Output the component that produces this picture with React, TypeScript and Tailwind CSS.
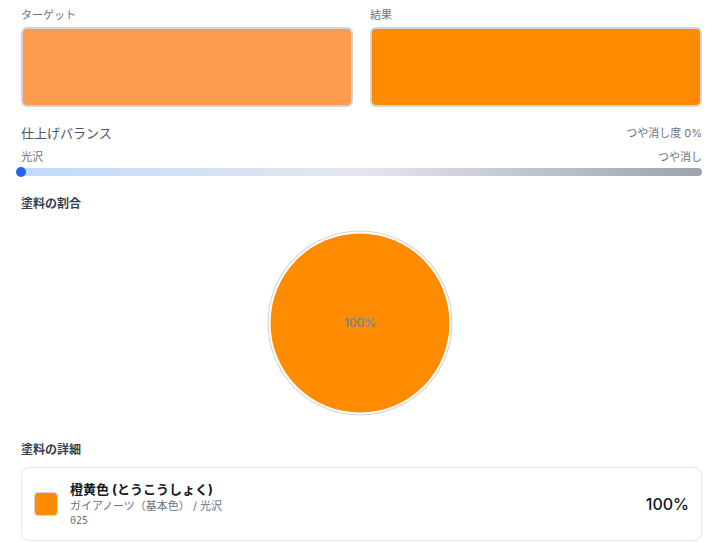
import React from "react";

const font = { fontFamily: "Inter, 'Noto Sans CJK JP', sans-serif" };

export default function App() {
  return (
    <div className="w-[718px] h-[543px] bg-white overflow-hidden pl-[21px] pr-[16px] pt-[6px]" style={font}>
      <div className="grid grid-cols-2 gap-[17px]">
        <div>
          <div className="text-[11px] leading-[18px] text-[#6b7280]">ターゲット</div>
          <div className="mt-[3px] h-[80px] rounded-[6px] border-2 border-[#d1d5db] bg-[#fd9a4b]" />
        </div>
        <div>
          <div className="text-[11px] leading-[18px] text-[#6b7280]">結果</div>
          <div className="mt-[3px] h-[80px] rounded-[6px] border-2 border-[#d1d5db] bg-[#ff8c00]" />
        </div>
      </div>

      <div className="mt-[16px] flex items-center justify-between">
        <span className="text-[13px] leading-[20px] text-[#4b5563]">仕上げバランス</span>
        <span className="text-[11px] leading-[20px] text-[#6b7280]">つや消し度 0%</span>
      </div>
      <div className="mt-[7px] flex items-center justify-between text-[11px] leading-[14px] text-[#6b7280]">
        <span>光沢</span>
        <span>つや消し</span>
      </div>
      <div className="relative mt-[4px] h-[8px] rounded-full bg-gradient-to-r from-[#bfdbfe] via-[#e5e7eb] to-[#9ca3af]">
        <div className="absolute left-[-5px] top-[-1px] h-[10px] w-[10px] rounded-full bg-[#2563eb]" />
      </div>

      <div className="mt-[19px] text-[12px] leading-[18px] font-bold text-[#374151]">塗料の割合</div>

      <div className="mt-[16px] flex justify-center pr-[4px]">
        <svg width="188" height="188" viewBox="0 0 188 188">
          <circle cx="94" cy="94" r="92" fill="white" stroke="#d1d5db" strokeWidth="1.2" />
          <circle cx="94" cy="94" r="89.5" fill="#ff8c00" />
          <text
            x="94"
            y="98"
            textAnchor="middle"
            fontSize="12"
            fill="#5f5f5f"
            stroke="#9a9a9a"
            strokeWidth="0.5"
            fontFamily="Inter, sans-serif"
          >
            100%
          </text>
        </svg>
      </div>

      <div className="mt-[24px] text-[12px] leading-[18px] font-bold text-[#374151]">塗料の詳細</div>

      <div className="mt-[8px] h-[74px] rounded-[8px] border border-[#e5e7eb] flex items-center pl-[12px] pr-[12px]">
        <div className="h-[24px] w-[24px] rounded-[4px] border border-[#d1d5db] bg-[#ff8c00]" />
        <div className="ml-[12px] flex-1 flex flex-col">
          <span className="text-[13px] leading-[18px] font-bold text-[#111827]">橙黄色 (とうこうしょく)</span>
          <span className="text-[11px] leading-[16px] text-[#6b7280]">ガイアノーツ（基本色） / 光沢</span>
          <span className="text-[10px] leading-[14px] text-[#6b7280]" style={{ fontFamily: "'DejaVu Sans Mono', monospace" }}>025</span>
        </div>
        <span className="text-[16px] font-medium text-[#111827]">100%</span>
      </div>
    </div>
  );
}
